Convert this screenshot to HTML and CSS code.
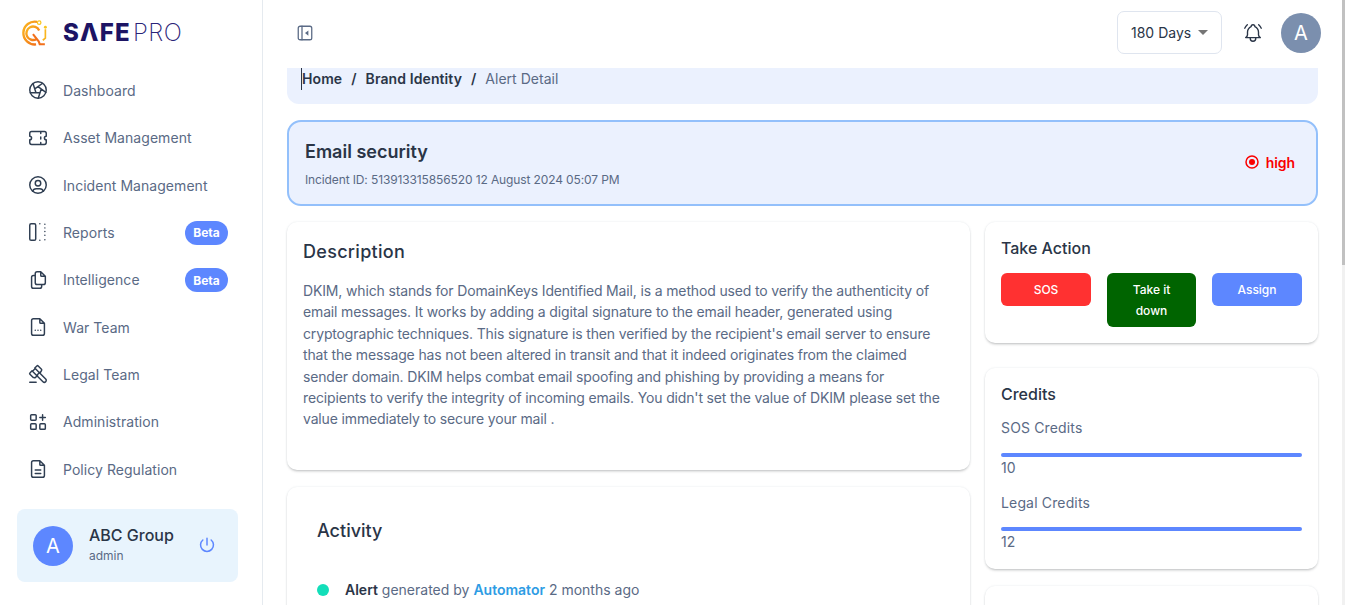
FILE: index.html
```html
<!DOCTYPE html>
<html lang="en">
<head>
<meta charset="utf-8">
<title>Alert Detail</title>
<link rel="stylesheet" href="styles.css">
</head>
<body>
<div class="app">
  <aside class="sidebar">
    <div class="logo">
      <svg class="logo-mark" width="29" height="29" viewBox="0 0 28 28" fill="none">
        <defs><linearGradient id="lg" x1="0" y1="0" x2="1" y2="1"><stop offset="0" stop-color="#fbb81f"/><stop offset="1" stop-color="#f2701b"/></linearGradient></defs>
        <path d="M16.500 2.800A11 11 0 1 0 15.500 24.500" stroke="url(#lg)" stroke-width="2.300"/>
        <path d="M18.500 11A6.500 6.500 0 1 0 15.800 19.500" stroke="url(#lg)" stroke-width="2.300"/>
        <path d="M12.500 14.500l5.500 7 1 2.800h5" stroke="#f2701b" stroke-width="2"/>
        <path d="M24.500 10v8.500l-2.500 2" stroke="#f9b51f" stroke-width="1.600"/>
        <circle cx="18.500" cy="3.500" r="1.700" stroke="#f9c51f" stroke-width="1.200"/>
        <circle cx="24.500" cy="8" r="1.400" fill="#f9c51f"/>
      </svg>
      <span class="logo-text"><span class="logo-safe">SΛFE</span><span class="logo-pro">PRO</span></span>
    </div>
    <nav class="nav">
      <a class="nav-item"><svg class="ic" viewBox="0 0 24 24"><circle cx="12" cy="12" r="9"/><path d="M3.600 15h10.550M6.551 4.938l3.260 10.034M17.032 4.636l-8.535 6.201M20.559 14.510l-8.535-6.201M12.257 20.916l3.261-10.034"/></svg><span>Dashboard</span></a>
      <a class="nav-item"><svg class="ic" viewBox="0 0 24 24"><path d="M15 5v2M15 11v2M15 17v2M5 5h14a2 2 0 0 1 2 2v3a2 2 0 0 0 0 4v3a2 2 0 0 1-2 2H5a2 2 0 0 1-2-2v-3a2 2 0 0 0 0-4V7a2 2 0 0 1 2-2"/></svg><span>Asset Management</span></a>
      <a class="nav-item"><svg class="ic" viewBox="0 0 24 24"><circle cx="12" cy="12" r="9"/><circle cx="12" cy="10" r="3"/><path d="M6.168 18.849A4 4 0 0 1 10 16h4a4 4 0 0 1 3.832 2.855"/></svg><span>Incident Management</span></a>
      <a class="nav-item"><svg class="ic" viewBox="0 0 24 24"><rect x="3" y="3" width="6.500" height="18" rx="1.500"/><path d="M14 3v.01M14 21v.01M19.500 3.500v.01M19.500 7.500v.01M19.500 11.500v.01M19.500 15.500v.01M19.500 20.500v.01"/></svg><span>Reports</span><b class="badge">Beta</b></a>
      <a class="nav-item"><svg class="ic" viewBox="0 0 24 24"><path d="M15 3v4a1 1 0 0 0 1 1h4M18 17h-7a2 2 0 0 1-2-2V5a2 2 0 0 1 2-2h4l5 5v7a2 2 0 0 1-2 2zM16 17v2a2 2 0 0 1-2 2H7a2 2 0 0 1-2-2V9a2 2 0 0 1 2-2h2"/></svg><span>Intelligence</span><b class="badge">Beta</b></a>
      <a class="nav-item"><svg class="ic" viewBox="0 0 24 24"><path d="M14 3v4a1 1 0 0 0 1 1h4M17 21H7a2 2 0 0 1-2-2V5a2 2 0 0 1 2-2h7l5 5v11a2 2 0 0 1-2 2zM9 15.500v.01M12 15.500v.01M15 15.500v.01"/></svg><span>War Team</span></a>
      <a class="nav-item"><svg class="ic" viewBox="0 0 24 24"><path d="M13 10l7.383 7.418c.823.820.823 2.148 0 2.967a2.110 2.110 0 0 1-2.976 0L10 13M6 9l4 4M13 10L9 6M3 21h7M6.793 15.793l-3.586-3.586a1 1 0 0 1 0-1.414L5.500 8.500l.5.500 3-3-.5-.5 2.293-2.293a1 1 0 0 1 1.414 0l3.586 3.586a1 1 0 0 1 0 1.414L14.500 10.500l-.5-.5-3 3 .5.500-2.293 2.293a1 1 0 0 1-1.414 0z"/></svg><span>Legal Team</span></a>
      <a class="nav-item"><svg class="ic" viewBox="0 0 24 24"><rect x="4" y="4" width="6" height="6" rx="1"/><rect x="4" y="14" width="6" height="6" rx="1"/><rect x="14" y="14" width="6" height="6" rx="1"/><path d="M14 7h6M17 4v6"/></svg><span>Administration</span></a>
      <a class="nav-item"><svg class="ic" viewBox="0 0 24 24"><path d="M14 3v4a1 1 0 0 0 1 1h4M17 21H7a2 2 0 0 1-2-2V5a2 2 0 0 1 2-2h7l5 5v11a2 2 0 0 1-2 2zM9 13h6M9 17h6"/></svg><span>Policy Regulation</span></a>
    </nav>
    <div class="profile">
      <div class="profile-avatar">A</div>
      <div class="profile-info">
        <div class="profile-name">ABC Group</div>
        <div class="profile-role">admin</div>
      </div>
      <svg class="power" viewBox="0 0 24 24"><path d="M7 6a7.750 7.750 0 1 0 10 0M12 4v8"/></svg>
    </div>
  </aside>

  <div class="main">
    <header class="topbar">
      <svg class="collapse" viewBox="0 0 24 24"><rect x="3" y="3" width="18" height="18" rx="2.500"/><path d="M8 3v18"/><path class="collapse-arrow" d="M16.500 8.500l-4.500 3.500 4.500 3.500z"/></svg>
      <div class="top-right">
        <div class="select"><span>180 Days</span><i class="caret"></i></div>
        <svg class="bell" viewBox="0 0 24 24"><path d="M10 5a2 2 0 0 1 4 0a7 7 0 0 1 4 6v3a4 4 0 0 0 2 3H4a4 4 0 0 0 2-3v-3a7 7 0 0 1 4-6M9 17v1a3 3 0 0 0 6 0v-1M21 6.727A11.050 11.050 0 0 0 18.206 3M3 6.727A11.050 11.050 0 0 1 5.792 3"/></svg>
        <div class="top-avatar">A</div>
      </div>
    </header>
    <div class="content">
      <div class="breadcrumb">
        <span class="crumb crumb-first">Home</span><span class="sep">/</span><span class="crumb">Brand Identity</span><span class="sep">/</span><span class="crumb-current">Alert Detail</span>
      </div>
      <section class="alert">
        <div class="alert-body">
          <h1 class="alert-title">Email security</h1>
          <p class="alert-meta">Incident ID: 513913315856520 12 August 2024 05:07 PM</p>
        </div>
        <div class="severity"><svg class="sev-ic" viewBox="0 0 14 14"><circle cx="7" cy="7" r="6"/><circle class="sev-dot" cx="7" cy="7" r="3"/></svg>high</div>
      </section>
      <div class="columns">
        <div class="col">
          <section class="card desc">
            <h2 class="desc-title">Description</h2>
            <p class="desc-text">DKIM, which stands for DomainKeys Identified Mail, is a method used to verify the authenticity of email messages. It works by adding a digital signature to the email header, generated using cryptographic techniques. This signature is then verified by the recipient's email server to ensure that the message has not been altered in transit and that it indeed originates from the claimed sender domain. DKIM helps combat email spoofing and phishing by providing a means for recipients to verify the integrity of incoming emails. You didn't set the value of DKIM please set the value immediately to secure your mail .</p>
          </section>
          <section class="card activity">
            <h2 class="activity-title">Activity</h2>
            <div class="activity-row"><i class="dot"></i><span><b>Alert</b> generated by <b class="link">Automator</b> 2 months ago</span></div>
          </section>
        </div>
        <div class="col col-side">
          <section class="card action">
            <h2 class="side-title">Take Action</h2>
            <div class="buttons">
              <button class="btn btn-red">SOS</button>
              <button class="btn btn-green">Take it down</button>
              <button class="btn btn-blue">Assign</button>
            </div>
          </section>
          <section class="card credits">
            <h2 class="side-title">Credits</h2>
            <div class="credit"><div class="credit-label">SOS Credits</div><div class="bar"></div><div class="credit-value">10</div></div>
            <div class="credit credit-second"><div class="credit-label">Legal Credits</div><div class="bar"></div><div class="credit-value">12</div></div>
          </section>
          <section class="card empty"></section>
        </div>
      </div>
    </div>
  </div>
  <div class="scrollbar"><div class="thumb"></div></div>
</div>
</body>
</html>
```
FILE: styles.css
```css
* { box-sizing: border-box; }
html, body { margin: 0; height: 100%; overflow: hidden; }
body { font-family: Inter, "Liberation Sans", sans-serif; color: #2a3547; background: #fff; font-size: 14px; }
h1, h2, p { margin: 0; }
.app { display: flex; width: 1345px; height: 605px; overflow: hidden; }

.sidebar { width: 263px; flex: none; border-right: 1px solid #e5eaef; padding: 0 24px 0 17px; display: flex; flex-direction: column; }
.logo { height: 66.700px; flex: none; display: flex; align-items: center; padding-left: 3px; gap: 14px; }
.logo-mark { flex: none; }
.logo-text { display: flex; align-items: baseline; font-size: 24px; line-height: 1; }
.logo-safe { font-weight: 800; color: #1d1464; letter-spacing: 1.250px; }
.logo-pro { font-weight: 200; color: #2a2478; letter-spacing: .5px; margin-left: 2px; }

.nav { display: flex; flex-direction: column; }
.nav-item { height: 47.350px; flex: none; display: flex; align-items: center; padding-left: 10px; color: #5a6a85; font-size: 14px; letter-spacing: .05px; }
.ic { width: 22px; height: 22px; flex: none; margin-right: 14px; fill: none; stroke: #2f3e52; stroke-width: 1.600; stroke-linecap: round; stroke-linejoin: round; }
.badge { margin-left: auto; background: #5d87ff; color: #fff; font-size: 12px; font-weight: 700; height: 24px; width: 43px; border-radius: 12px; display: flex; align-items: center; justify-content: center; margin-right: 10px; margin-top: 1px; letter-spacing: 0; }

.profile { margin-top: 16px; width: 221px; height: 73px; flex: none; background: #e8f4fd; border-radius: 8px; display: flex; align-items: center; padding: 0 16px; }
.profile-avatar { width: 40px; height: 40px; border-radius: 50%; background: #5d87ff; color: #fff; font-size: 20px; display: flex; align-items: center; justify-content: center; flex: none; margin-top: 1px; }
.profile-info { margin-left: 16px; flex: 1; margin-top: -2px; }
.profile-name { font-size: 16px; font-weight: 500; line-height: 22px; color: #2a3547; }
.profile-role { font-size: 12px; line-height: 18px; color: #5a6a85; margin-top: 1px; }
.power { width: 20px; height: 20px; fill: none; stroke: #5d87ff; stroke-width: 1.800; stroke-linecap: round; margin-right: 5px; }

.main { flex: 1; min-width: 0; display: flex; flex-direction: column; }
.topbar { height: 68px; flex: none; display: flex; align-items: center; justify-content: space-between; padding: 0 24px 0 33px; }
.collapse { width: 18px; height: 18px; margin-top: -2px; fill: none; stroke: #5a6a85; stroke-width: 1.700; stroke-linecap: round; stroke-linejoin: round; }
.collapse-arrow { fill: #5a6a85; stroke: none; }
.top-right { display: flex; align-items: center; }
.select { width: 105px; height: 43px; border: 1px solid #dfe5ef; border-radius: 7px; display: flex; align-items: center; justify-content: space-between; padding: 0 13px; font-size: 14px; color: #2a3547; margin-top: -3px; }
.caret { width: 0; height: 0; border-left: 5px solid transparent; border-right: 5px solid transparent; border-top: 5px solid #757575; }
.bell { width: 22px; height: 22px; margin-left: 20px; margin-top: -2px; fill: none; stroke: #2a3547; stroke-width: 1.500; stroke-linecap: round; stroke-linejoin: round; }
.top-avatar { width: 40px; height: 40px; margin-left: 17px; border-radius: 50%; background: #7b8fae; color: #fff; font-size: 20px; display: flex; align-items: center; justify-content: center; margin-top: -2px; }

.content { flex: 1; min-height: 0; overflow: hidden; padding: 0 27px 0 24px; }
.breadcrumb { height: 36px; background: #ebf1fe; border-radius: 0 0 12px 12px; padding: 0 15px; display: flex; align-items: flex-start; line-height: 22px; font-size: 14px; }
.crumb { font-weight: 600; color: #2a3547; letter-spacing: .1px; }
.crumb-first { box-shadow: -1px 0 0 #2a3547; }
.crumb-current { color: #5a6a85; letter-spacing: .02px; }
.sep { margin: 0 9px; font-weight: 600; }

.alert { margin-top: 16px; height: 86px; background: #ebf1fe; border: 2px solid #93c0fb; border-radius: 14px; display: flex; align-items: center; justify-content: space-between; padding: 0 21px 0 16px; }
.alert-body { padding-top: 3px; }
.alert-title { font-size: 18px; font-weight: 600; line-height: 24px; color: #2a3547; }
.alert-meta { font-size: 12px; line-height: 18px; margin-top: 7px; color: #5a6a85; letter-spacing: -.12px; }
.severity { color: #fa0000; font-weight: 600; font-size: 14px; letter-spacing: -.1px; display: flex; align-items: center; gap: 7px; margin-top: -2px; }
.sev-ic { width: 14px; height: 14px; fill: none; stroke: #fa0000; stroke-width: 1.500; }
.sev-dot { fill: #fa0000; stroke: none; }

.columns { margin-top: 16px; display: grid; grid-template-columns: 683px 333px; column-gap: 15px; align-items: start; }
.col { display: flex; flex-direction: column; gap: 17px; }
.col-side { gap: 25px; }
.card { background: #fff; border-radius: 10px; box-shadow: 0 0 2px rgba(145,158,171,.25), 0 2px 3px -1px rgba(0,0,0,.25); }
.desc { height: 248px; padding: 17px 22px 16px 16px; }
.desc-title { font-size: 18px; font-weight: 500; line-height: 26px; color: #2a3547; letter-spacing: .3px; }
.desc-text { margin-top: 15px; font-size: 14px; line-height: 21.400px; color: #5a6a85; letter-spacing: -.15px; }
.activity { height: 200px; padding: 30px; }
.activity-title { font-size: 18px; font-weight: 500; line-height: 28px; }
.activity-row { margin-top: 35px; display: flex; align-items: center; gap: 16px; font-size: 14px; line-height: 20px; color: #5a6a85; }
.activity-row b { font-weight: 600; color: #2a3547; }
.activity-row .link { color: #2d9ce4; }
.dot { width: 12px; height: 12px; border-radius: 50%; background: #13deb9; flex: none; }

.action { height: 121px; padding: 16px; }
.side-title { font-size: 16px; font-weight: 500; line-height: 20px; color: #2a3547; }
.buttons { margin-top: 15px; display: flex; justify-content: space-between; align-items: flex-start; }
.btn { font: inherit; font-size: 12px; font-weight: 500; line-height: 21px; border: 0; color: #fff; border-radius: 6px; padding: 6px 16px; width: 90px; min-height: 33px; }
.btn-red { background: #ff3131; }
.btn-green { background: #006400; width: 89px; }
.btn-blue { background: #5d87ff; }
.credits { height: 201px; padding: 16px; }
.credit-label { font-size: 14px; line-height: 20px; color: #5a6a85; margin-top: 14px; letter-spacing: .15px; }
.bar { margin-top: 15px; height: 4px; border-radius: 2px; background: #5d87ff; }
.credit-second .bar { margin-top: 14px; }
.credit-value { font-size: 14px; line-height: 22px; color: #5a6a85; }
.empty { height: 120px; margin-top: -8px; }

.scrollbar { position: absolute; right: 0; top: 0; width: 3px; height: 605px; background: #f1f1f1; }
.thumb { height: 265px; background: #c1c1c1; }
```
